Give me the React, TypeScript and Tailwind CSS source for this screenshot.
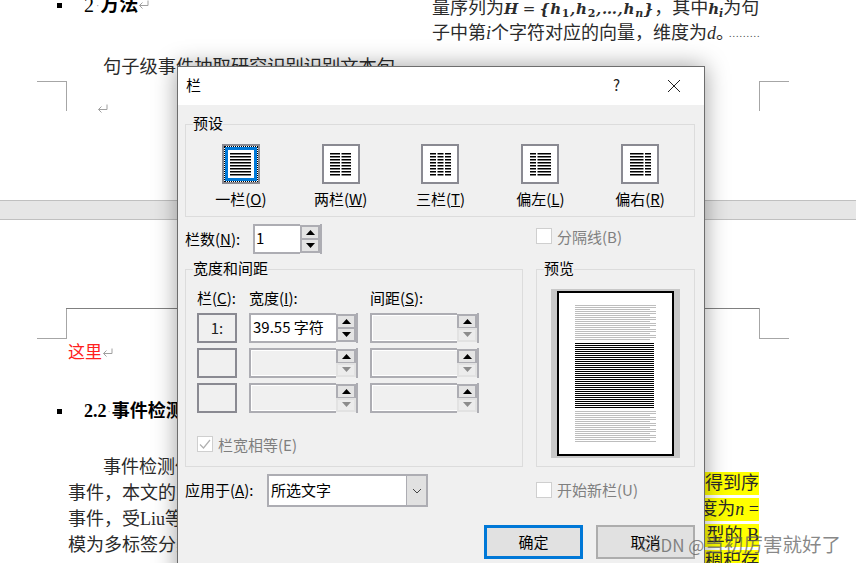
import React from "react";

const docFont = "font-['Liberation_Serif','Noto_Sans_CJK_SC',serif]";
const uiFont = "font-['Noto_Sans_CJK_SC','Liberation_Sans',sans-serif]";

function Ret({ className = "" }: { className?: string }) {
  return (
    <svg width="11" height="10" viewBox="0 0 11 10" className={className} fill="none" stroke="#a0a0a0" strokeWidth="1">
      <path d="M10 0.5V5.5H1.5M4.5 2.5L1.5 5.5L4.5 8.5" />
    </svg>
  );
}

function Bullet() {
  return <span className="block w-[5px] h-[5px] bg-black shrink-0" />;
}

function Crop({ className }: { className: string }) {
  return <div className={"absolute border-[#a6a6a6] " + className} />;
}

function MathLine() {
  const b = "font-['DejaVu_Serif',serif] font-bold italic text-[15px]";
  return (
    <span>
      量序列为<span className={b}>H</span> <span className="font-['DejaVu_Serif',serif] text-[15px]">=</span>{" "}
      <span className={b + " tracking-[0.7px]"}>
        {"{"}h<sub className="text-[11px] not-italic">1</sub>,h<sub className="text-[11px] not-italic">2</sub>,…,h
        <sub className="text-[11px]">n</sub>
        {"}"}
      </span>
      ，其中<span className={b}>h<sub className="text-[11px]">i</sub></span>为句
    </span>
  );
}

function Doc() {
  return (
    <div className={docFont + " text-[18px] text-[#2b2b2b]"}>
      {/* first page */}
      <div className="relative h-[200px] overflow-hidden flex bg-white">
        <div className="w-[432px] shrink-0">
          <div className="flex items-center h-[24px] -mt-[7px] pl-[57px]">
            <Bullet />
            <span className="ml-[22px] text-[20px] text-black">2</span>
            <span className="text-[#999] text-[10px] mx-[2px]">·</span>
            <span className="font-bold text-[19px] text-black -ml-[1px]">方法</span>
            <Ret />
          </div>
          <div className="mt-[37px] h-[26px] leading-[26px] pl-[103px] whitespace-nowrap text-[18.25px]">句子级事件抽取研究识别识别文本句</div>
          <div className="mt-[24px] pl-[97px]">
            <Ret />
          </div>
        </div>
        <div className="w-[340px] shrink-0 leading-[25px] -mt-[4px] whitespace-nowrap">
          <div className="h-[25px] leading-[25px]">
            <MathLine />
          </div>
          <div className="h-[25px] flex items-center">
            子中第<i className="font-['Liberation_Serif',serif]">i</i>个字符对应的向量，维度为<i className="font-['Liberation_Serif',serif]">d</i>。
            <span className="text-[10px] tracking-[1px] -ml-[5px] text-[#444]">.........</span>
          </div>
        </div>
        <Crop className="left-[37px] top-[81px] w-[30px] h-[30px] border-t border-r" />
        <Crop className="left-[759px] top-[81px] w-[30px] h-[30px] border-t border-l" />
      </div>
      {/* gap between pages */}
      <div className="h-[20px] bg-[#e6e6e6] border-y border-[#c0c0c0]" />
      {/* second page */}
      <div className="relative h-[343px] overflow-hidden bg-white">
        <div className="absolute left-[37px] top-[88px] w-[30px] h-[31px] border-b border-r border-[#a6a6a6]" />
        <div className="absolute left-[66px] top-[88px] w-[694px] border-t border-[#808080]" />
        <div className="absolute left-[759px] top-[88px] w-[30px] h-[31px] border-b border-l border-[#a6a6a6]" />
        <div className="pl-[68px] pt-[120px]">
          <div className="flex items-center h-[26px] text-[17px] text-[#ff2020]">
            这里
            <Ret />
          </div>
          <div className="flex items-center h-[26px] mt-[32px] -ml-[11px]">
            <Bullet />
            <span className="ml-[22px] font-bold text-black">2.2</span>
            <span className="text-[#999] text-[10px] mx-[1px]">·</span>
            <span className="font-bold text-black whitespace-nowrap">事件检测</span>
          </div>
          <div className="flex mt-[30px]">
            <div className="w-[400px] leading-[26px] whitespace-nowrap">
              <div className="pl-[35px]">事件检测任务旨在</div>
              <div>事件，本文的方法是</div>
              <div>事件，受Liu等人的启</div>
              <div>模为多标签分类问题</div>
            </div>
            <div className="w-[291px] pt-[18px] flex flex-col gap-[3px] items-end whitespace-nowrap leading-[23px]">
              <div className="h-[23px] bg-[#ffff00] w-[120px] text-right">得到序</div>
              <div className="h-[23px] bg-[#ffff00] w-[120px] text-right">度为<i className="font-['Liberation_Serif',serif]">n</i> =</div>
              <div className="h-[23px] bg-[#ffff00] w-[120px] text-right">型的 B</div>
              <div className="h-[23px] bg-[#ffff00] w-[120px] text-right">稠积存</div>
            </div>
          </div>
        </div>
      </div>
    </div>
  );
}

function Group({ title, className, children }: { title: string; className: string; children: React.ReactNode }) {
  return (
    <div className={"relative border border-[#dcdcdc] " + className}>
      <span className="absolute left-[7px] -top-[12px] h-[20px] leading-[20px] bg-[#f0f0f0] text-black">{title}</span>
      {children}
    </div>
  );
}

function PresetIcon({ cols, selected }: { cols: [number, number][]; selected?: boolean }) {
  const ys = [0, 3, 6, 9, 12, 15, 18, 21];
  return (
    <div className="w-[38px] h-[40px] border-2 border-[#8a8a92] bg-white flex items-center justify-center">
      <div className={selected ? "w-[34px] h-[36px] border border-dotted border-black flex" : "contents"}>
        <div className={selected ? "flex-1 border-[3px] border-[#0078d7] flex items-center justify-center" : "contents"}>
          <svg width="21" height="23" viewBox="0 0 21 23">
            {cols.map(([x, w], i) =>
              ys.map((y) => <rect key={i + "-" + y} x={x} y={y} width={w} height="1.5" fill="#000" />)
            )}
          </svg>
        </div>
      </div>
    </div>
  );
}

function Preset({ label, k, cols, selected }: { label: string; k: string; cols: [number, number][]; selected?: boolean }) {
  return (
    <div className="w-[99.8px] flex flex-col items-center">
      <PresetIcon cols={cols} selected={selected} />
      <div className="mt-[5px] h-[20px] leading-[20px] whitespace-nowrap text-black">
        {label}(<u>{k}</u>)
      </div>
    </div>
  );
}

function Tri({ up, dim }: { up?: boolean; dim?: boolean }) {
  return (
    <svg width="9" height="5" viewBox="0 0 9 5">
      <path d={up ? "M4.5 0L9 5H0Z" : "M0 0H9L4.5 5Z"} fill={dim ? "#8c8c8c" : "#000"} />
    </svg>
  );
}

function Spinner({ value, enabled, downEnabled, className }: { value?: string; enabled?: boolean; downEnabled?: boolean; className: string }) {
  return (
    <div className={"border-2 border-[#adadb3] flex " + (enabled ? "bg-white " : "bg-[#f0f0f0] ") + className}>
      <div className={"flex-1 min-w-0 flex items-center pl-[1px] -mt-[2px] whitespace-nowrap text-black " + (enabled ? "" : "border border-white border-r-0 mt-0")}>{value}</div>
      <div className="w-[20px] flex flex-col bg-[#f0f0f0] -my-[2px]">
        <div className="flex-1 mt-[1px] border-2 border-[#adadb3] bg-[#e4e4e4] flex items-center justify-center">
          <Tri up />
        </div>
        <div className={"flex-1 mb-[1px] border-2 flex items-center justify-center " + (downEnabled ? "border-[#adadb3] bg-[#e4e4e4] -mt-[2px]" : "border-[#e2e2e2] bg-[#ececec] -mt-[1px]")}>
          <Tri dim={!downEnabled} />
        </div>
      </div>
    </div>
  );
}

function Check({ checked, label, k, drop }: { checked?: boolean; label: string; k: string; drop?: boolean }) {
  return (
    <div className="flex items-center text-[#7f7f7f]">
      <div className="w-[16px] h-[16px] border border-[#cfcfcf] bg-white flex items-center justify-center mr-[5px]">
        {checked && (
          <svg width="12" height="10" viewBox="0 0 12 10" fill="none" stroke="#b0b0b0" strokeWidth="1.2">
            <path d="M1 5.5L4.5 9L11 1" />
          </svg>
        )}
      </div>
      <span className={"whitespace-nowrap " + (drop ? "mt-[2px]" : "")}>
        {label}({k})
      </span>
    </div>
  );
}

function ColBox({ text }: { text?: string }) {
  return <div className="h-[30px] border-2 border-[#8a8a92] flex items-center justify-center text-[#222]">{text}</div>;
}

function PreviewPage() {
  const top = Array.from({ length: 18 }, (_, i) => i);
  const bot = Array.from({ length: 16 }, (_, i) => i);
  const blk = Array.from({ length: 33 }, (_, i) => i);
  return (
    <svg width="113" height="161" viewBox="0 0 113 161" className="block" shapeRendering="crispEdges">
      {top.map((i) => (
        <rect key={"t" + i} x="16" y={12 + i * 2} width={i % 3 === 2 ? 75 : 81} height="1" fill="#bdbdbd" />
      ))}
      {blk.map((i) => (
        <rect key={"b" + i} x="16" y={50 + i * 2} width="79" height="1" fill="#000" />
      ))}
      {bot.map((i) => (
        <rect key={"m" + i} x="16" y={118 + i * 2} width={i % 3 === 2 ? 75 : 81} height="1" fill="#bdbdbd" />
      ))}
    </svg>
  );
}

function Dialog() {
  return (
    <div className={"absolute left-[177px] top-[66px] w-[528px] h-[520px] border border-[#6d6d6d] bg-[#f0f0f0] shadow-[0_0_22px_rgba(0,0,0,0.38)] text-[15px] leading-[20px] " + uiFont}>
      <div className="h-[38px] bg-white flex items-center pl-[8px] pb-[3px]">
        <span className="text-black">栏</span>
        <span className="ml-auto mr-[47px] text-[15px] text-[#222]">?</span>
        <svg width="14" height="14" viewBox="0 0 14 14" className="mr-[23px] mt-[2px]" fill="none" stroke="#222" strokeWidth="1">
          <path d="M1 1L13 13M13 1L1 13" />
        </svg>
      </div>
      <div className="pl-[7px]">
        <Group title="预设" className="mt-[19px] w-[510px] h-[93px] pt-[19px] pl-[5px]">
          <div className="flex">
            <Preset label="一栏" k="O" selected cols={[[0, 21]]} />
            <Preset label="两栏" k="W" cols={[[0, 10], [11.5, 9.5]]} />
            <Preset label="三栏" k="T" cols={[[0, 6], [7.5, 6], [15, 6]]} />
            <Preset label="偏左" k="L" cols={[[0, 6], [7.5, 13.5]]} />
            <Preset label="偏右" k="R" cols={[[0, 13.5], [15, 6]]} />
          </div>
        </Group>

        <div className="flex items-center mt-[7px] h-[30px]">
          <div className="w-[68px] text-black whitespace-nowrap">
            栏数(<u>N</u>):
          </div>
          <Spinner value="1" enabled downEnabled className="w-[69px] h-[30px]" />
          <div className="ml-[214px] -mt-[6px]">
            <Check label="分隔线" k="B" drop />
          </div>
        </div>

        <div className="flex mt-[15px] gap-[13px]">
          <Group title="宽度和间距" className="w-[338px] h-[198px] pt-[19px] pl-[11px]">
            <div className="grid grid-cols-[40px_109px_109px] gap-x-[12px] gap-y-[5px] text-black">
              <div className="whitespace-nowrap -mt-[1px]">
                栏(<u>C</u>):
              </div>
              <div className="whitespace-nowrap -mt-[1px]">
                宽度(<u>I</u>):
              </div>
              <div className="whitespace-nowrap -mt-[1px]">
                间距(<u>S</u>):
              </div>
              <ColBox text="1:" />
              <Spinner value="39.55 字符" enabled downEnabled className="h-[30px] pl-[1px]" />
              <Spinner className="h-[30px]" />
              <ColBox />
              <Spinner className="h-[30px]" />
              <Spinner className="h-[30px]" />
              <ColBox />
              <Spinner className="h-[30px]" />
              <Spinner className="h-[30px]" />
            </div>
            <div className="mt-[20px]">
              <Check checked label="栏宽相等" k="E" drop />
            </div>
          </Group>
          <Group title="预览" className="w-[159px] h-[198px] pt-[19px] pl-[14px]">
            <div className="w-[129px] h-[169px] bg-[#c8c8c8] flex justify-center pt-[2px]">
              <div className="w-[117px] h-[165px] border-2 border-black bg-white">
                <PreviewPage />
              </div>
            </div>
          </Group>
        </div>

        <div className="flex items-center mt-[7px]">
          <div className="w-[82px] text-black whitespace-nowrap -mt-[2px]">
            应用于(<u>A</u>):
          </div>
          <div className="w-[161px] h-[33px] border-2 border-[#adadb3] bg-white flex">
            <div className="flex-1 flex items-center pl-[2px] -mt-[2px] text-black">所选文字</div>
            <div className="w-[20px] bg-[#e1e1e1] border-l border-[#adadb3] flex items-center justify-center">
              <svg width="10" height="6" viewBox="0 0 10 6" fill="none" stroke="#444" strokeWidth="1">
                <path d="M1 1L5 5L9 1" />
              </svg>
            </div>
          </div>
          <div className="ml-[108px] -mt-[1px]">
            <Check label="开始新栏" k="U" />
          </div>
        </div>

        <div className="flex mt-[18px] ml-[299px] gap-[13px]">
          <div className="w-[99px] h-[34px] border-[3px] border-[#0078d7] bg-[#e1e1e1] flex items-center justify-center text-black">确定</div>
          <div className="w-[99px] h-[34px] border-2 border-[#adadad] bg-[#e1e1e1] flex items-center justify-center text-black">取消</div>
        </div>
      </div>
    </div>
  );
}

export default function App() {
  return (
    <div className="relative w-[856px] h-[563px] overflow-hidden bg-white">
      <Doc />
      <Dialog />
      <div className={"absolute left-[640px] top-[531px] h-[26px] leading-[26px] whitespace-nowrap text-[19.5px] text-[rgba(90,90,90,0.72)] " + uiFont}>
        <span className="text-[17px]">CSDN @</span>当初厉害就好了
      </div>
    </div>
  );
}
